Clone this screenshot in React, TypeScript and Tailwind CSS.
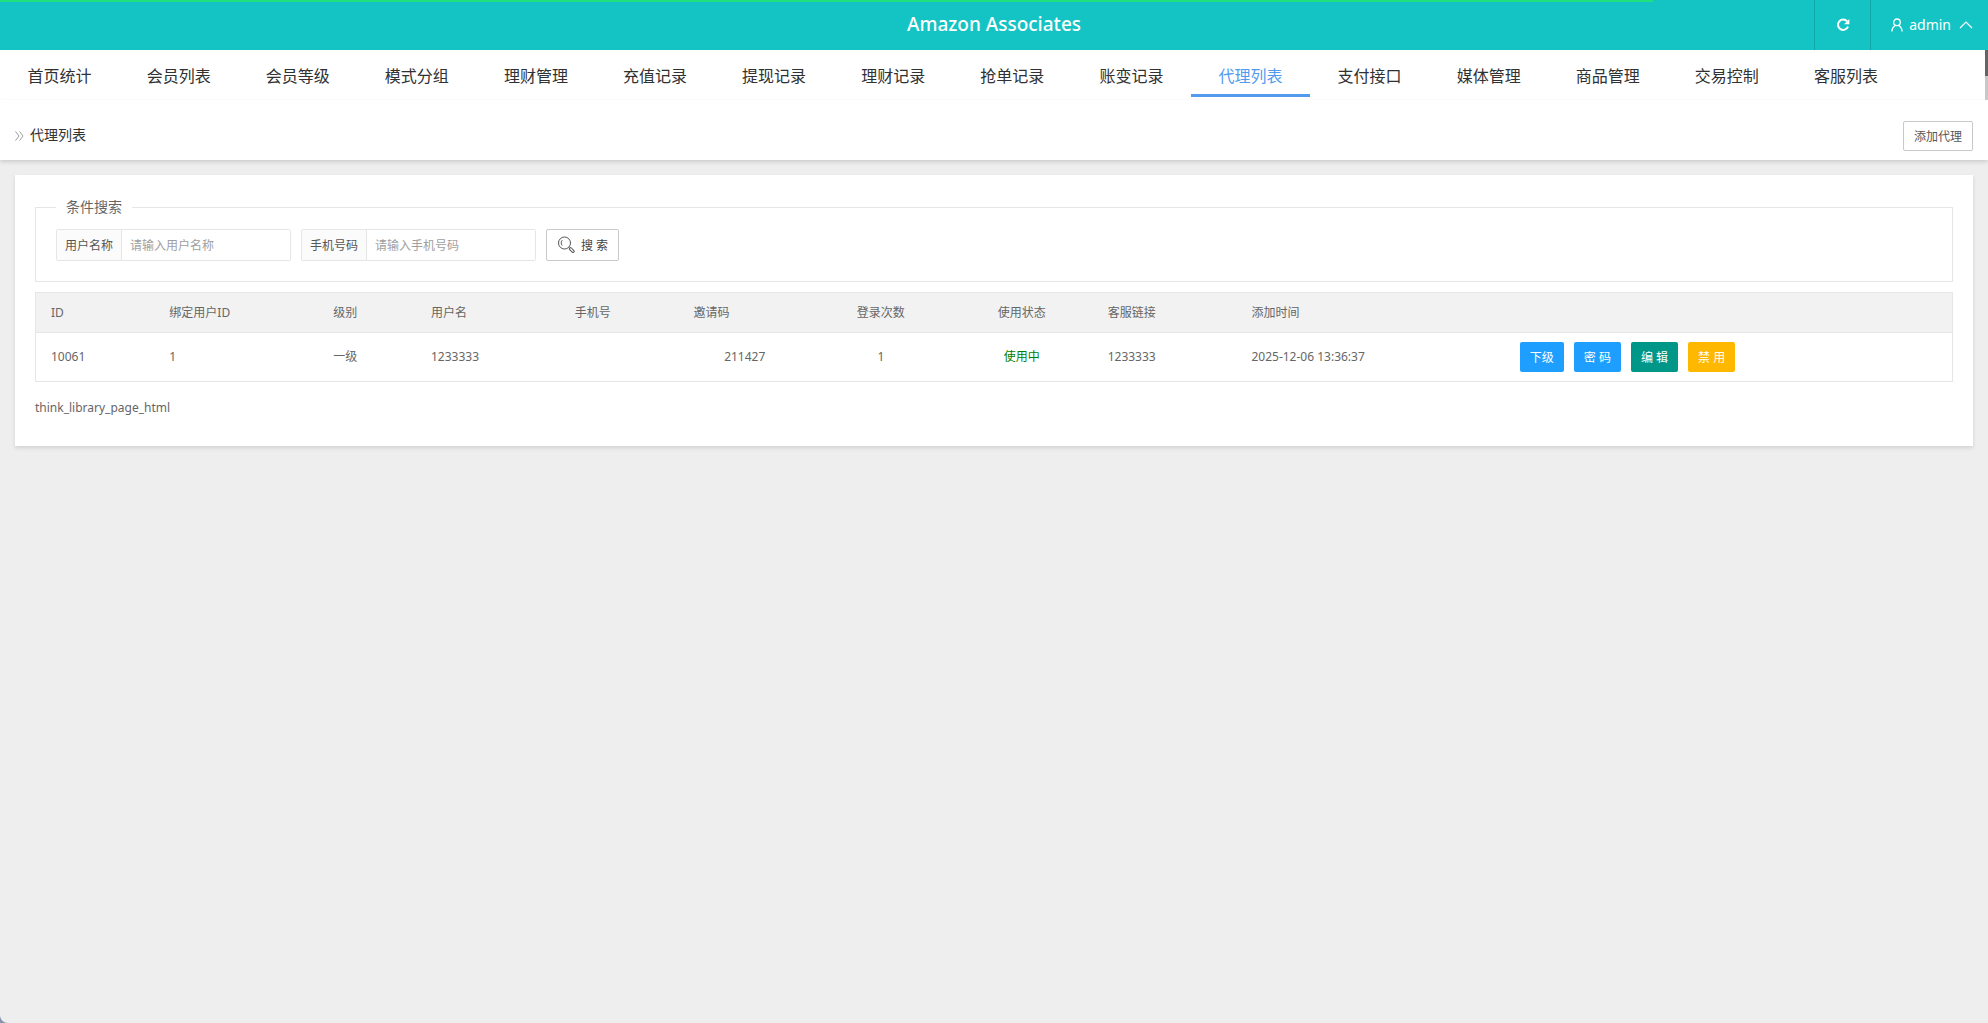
import React from 'react';

const tabs = [
  '首页统计', '会员列表', '会员等级', '模式分组', '理财管理', '充值记录', '提现记录', '理财记录',
  '抢单记录', '账变记录', '代理列表', '支付接口', '媒体管理', '商品管理', '交易控制', '客服列表',
];

const columns = [
  { title: 'ID', width: 'w-[6.2%]', head: 'text-left', cell: 'text-left', value: '10061' },
  { title: '绑定用户ID', width: 'w-[8.55%]', head: 'text-left', cell: 'text-left', value: '1' },
  { title: '级别', width: 'w-[5.1%]', head: 'text-left', cell: 'text-left', value: '一级' },
  { title: '用户名', width: 'w-[7.5%]', head: 'text-left', cell: 'text-left', value: '1233333' },
  { title: '手机号', width: 'w-[6.2%]', head: 'text-left', cell: 'text-left', value: '' },
  { title: '邀请码', width: 'w-[6.9%]', head: 'text-left', cell: 'text-center', value: '211427' },
  { title: '登录次数', width: 'w-[7.3%]', head: 'text-center', cell: 'text-center', value: '1' },
  { title: '使用状态', width: 'w-[7.4%]', head: 'text-center', cell: 'text-center text-[#008000]', value: '使用中' },
  { title: '客服链接', width: 'w-[7.5%]', head: 'text-left', cell: 'text-left', value: '1233333' },
  { title: '添加时间', width: 'w-[14%]', head: 'text-left', cell: 'text-left', value: '2025-12-06 13:36:37' },
];

const actions = [
  { label: '下级', color: 'bg-[#1e9fff]' },
  { label: '密 码', color: 'bg-[#1e9fff]' },
  { label: '编 辑', color: 'bg-[#009688]' },
  { label: '禁 用', color: 'bg-[#ffb800]' },
];

function Field({ id, label, placeholder }: { id: string; label: string; placeholder: string }) {
  return (
    <div className="flex h-8 w-[235px] rounded-xs border border-[#e6e6e6]">
      <label htmlFor={id} className="flex shrink-0 items-center border-r border-[#e6e6e6] bg-[#fbfbfb] px-2 pt-0.5 text-[#555]">
        {label}
      </label>
      <input id={id} type="text" placeholder={placeholder} className="min-w-0 flex-1 bg-white px-2 pt-0.5 outline-none placeholder:text-[#a0a0a0]" />
    </div>
  );
}

function Header() {
  return (
    <header className="relative grid h-[50px] grid-cols-[1fr_auto_1fr] items-center bg-[#14c4c4] text-white">
      <div className="absolute top-0 left-0 h-0.5 w-[83.15%] bg-[#22df80]" />
      <h1 className="col-start-2 text-[19px] font-medium">Amazon Associates</h1>
      <div className="flex h-full justify-end text-sm">
        <button type="button" aria-label="刷新" className="flex w-14 items-center justify-center border-l border-[#12a5a8]">
          <svg viewBox="0 0 14 14" className="size-3.5" fill="none" stroke="currentColor" strokeWidth="2">
            <path d="M11.2 3.4A5.2 5.2 0 1 0 12 8.7" />
            <path d="M13.4 1v5.3H8.1z" fill="currentColor" stroke="none" />
          </svg>
        </button>
        <button type="button" className="flex items-center border-l border-[#12a5a8] pr-[15px] pl-5">
          <svg viewBox="0 0 12 14" className="mr-1.5 h-3.5 w-3" fill="none" stroke="currentColor" strokeWidth="1.3">
            <circle cx="6" cy="4.3" r="3.3" />
            <path d="M.9 13.5C1 10.3 2.3 8.4 4.5 7.3M7.5 7.3c2.2 1.1 3.5 3 3.6 6.2" />
          </svg>
          admin
          <svg viewBox="0 0 14 8" className="ml-2 h-2 w-3.5" fill="none" stroke="currentColor" strokeWidth="1.2">
            <path d="M1 7l6-6 6 6" />
          </svg>
        </button>
      </div>
    </header>
  );
}

export default function App() {
  return (
    <div className="min-h-screen bg-[#8495ab]">
      <div className="min-h-screen rounded-bl-lg bg-[#eee] font-['Noto_Sans','Noto_Sans_CJK_SC',sans-serif] text-xs text-[#666]">
        <Header />
        <div className="flex h-[50px] bg-white">
          <nav className="flex min-w-0 flex-1 text-base text-[#303133]">
            {tabs.map((tab) => (
              <a
                key={tab}
                href="#"
                aria-current={tab === '代理列表' ? 'page' : undefined}
                className={
                  tab === '代理列表'
                    ? 'mb-[3px] flex w-[6%] items-center justify-center border-b-3 border-[#519aee] pt-2 whitespace-nowrap text-[#519aee]'
                    : 'mb-[3px] flex w-[6%] items-center justify-center border-b-3 border-transparent pt-2 whitespace-nowrap'
                }
              >
                {tab}
              </a>
            ))}
          </nav>
          <div className="w-[3px] bg-[#c8c8c8]">
            <div className="h-[26px] bg-[#646464]" />
          </div>
        </div>

        <div className="flex h-[60px] items-center justify-between bg-white px-[15px] pt-3 pb-1 shadow-[0_2px_4px_rgba(0,0,0,0.14)]">
          <h2 className="flex items-center gap-1.5 pt-0.5 text-sm text-[#333]">
            <svg viewBox="0 0 9 10" className="mt-0.5 h-2.5 w-[9px]" fill="none" stroke="#999" strokeWidth="1">
              <path d="M.5.5L4 5 .5 9.500M4.500.5L8 5 4.500 9.500" />
            </svg>
            代理列表
          </h2>
          <button type="button" className="mt-1 h-[30px] rounded-xs border border-[#c9c9c9] bg-white px-2.5 pt-0.5 text-[#555]">
            添加代理
          </button>
        </div>

        <main className="m-[15px] bg-white px-5 pt-[21px] pb-7 shadow-[0_2px_4px_rgba(0,0,0,0.12)]">
          <form>
            <fieldset className="border border-[#e6e6e6] px-5 pt-[11px] pb-5">
              <legend className="px-2.5 text-sm leading-[22px]">条件搜索</legend>
              <div className="flex gap-2.5">
                <Field id="username" label="用户名称" placeholder="请输入用户名称" />
                <Field id="phone" label="手机号码" placeholder="请输入手机号码" />
                <button type="button" className="flex h-8 items-center rounded-xs border border-[#c9c9c9] bg-white px-2.5 text-[#444]">
                  <svg viewBox="0 0 18 18" className="mr-1.5 size-[18px]" fill="none" stroke="#555" strokeWidth="1">
                    <circle cx="7.500" cy="7" r="6" />
                    <path d="M5.200 4.200C3.900 5.500 3.900 8 5.200 9.600M11.700 11.300l1.300 1.200" />
                    <rect x="12" y="12.900" width="5.600" height="2.400" rx="1" transform="rotate(45 14.800 14.100)" />
                  </svg>
                  <span className="pt-0.5">搜 索</span>
                </button>
              </div>
            </fieldset>
          </form>

          <table className="mt-2.5 w-full table-fixed border-collapse border border-[#e6e6e6]">
            <thead>
              <tr className="h-10 border-b border-[#e6e6e6] bg-[#f2f2f2]">
                {columns.map((c) => (
                  <th key={c.title} className={`px-[15px] font-normal whitespace-nowrap ${c.width} ${c.head}`}>{c.title}</th>
                ))}
                <td />
              </tr>
            </thead>
            <tbody>
              <tr className="h-[49px]">
                {columns.map((c) => (
                  <td key={c.title} className={`px-[15px] whitespace-nowrap ${c.cell}`}>{c.value}</td>
                ))}
                <td className="px-[15px]">
                  <div className="flex gap-2.5">
                    {actions.map((a) => (
                      <button key={a.label} type="button" className={`h-[30px] rounded-xs px-2.5 pt-0.5 whitespace-nowrap text-white ${a.color}`}>
                        {a.label}
                      </button>
                    ))}
                  </div>
                </td>
              </tr>
            </tbody>
          </table>
          <p className="mt-4 leading-5">think_library_page_html</p>
        </main>
      </div>
    </div>
  );
}
